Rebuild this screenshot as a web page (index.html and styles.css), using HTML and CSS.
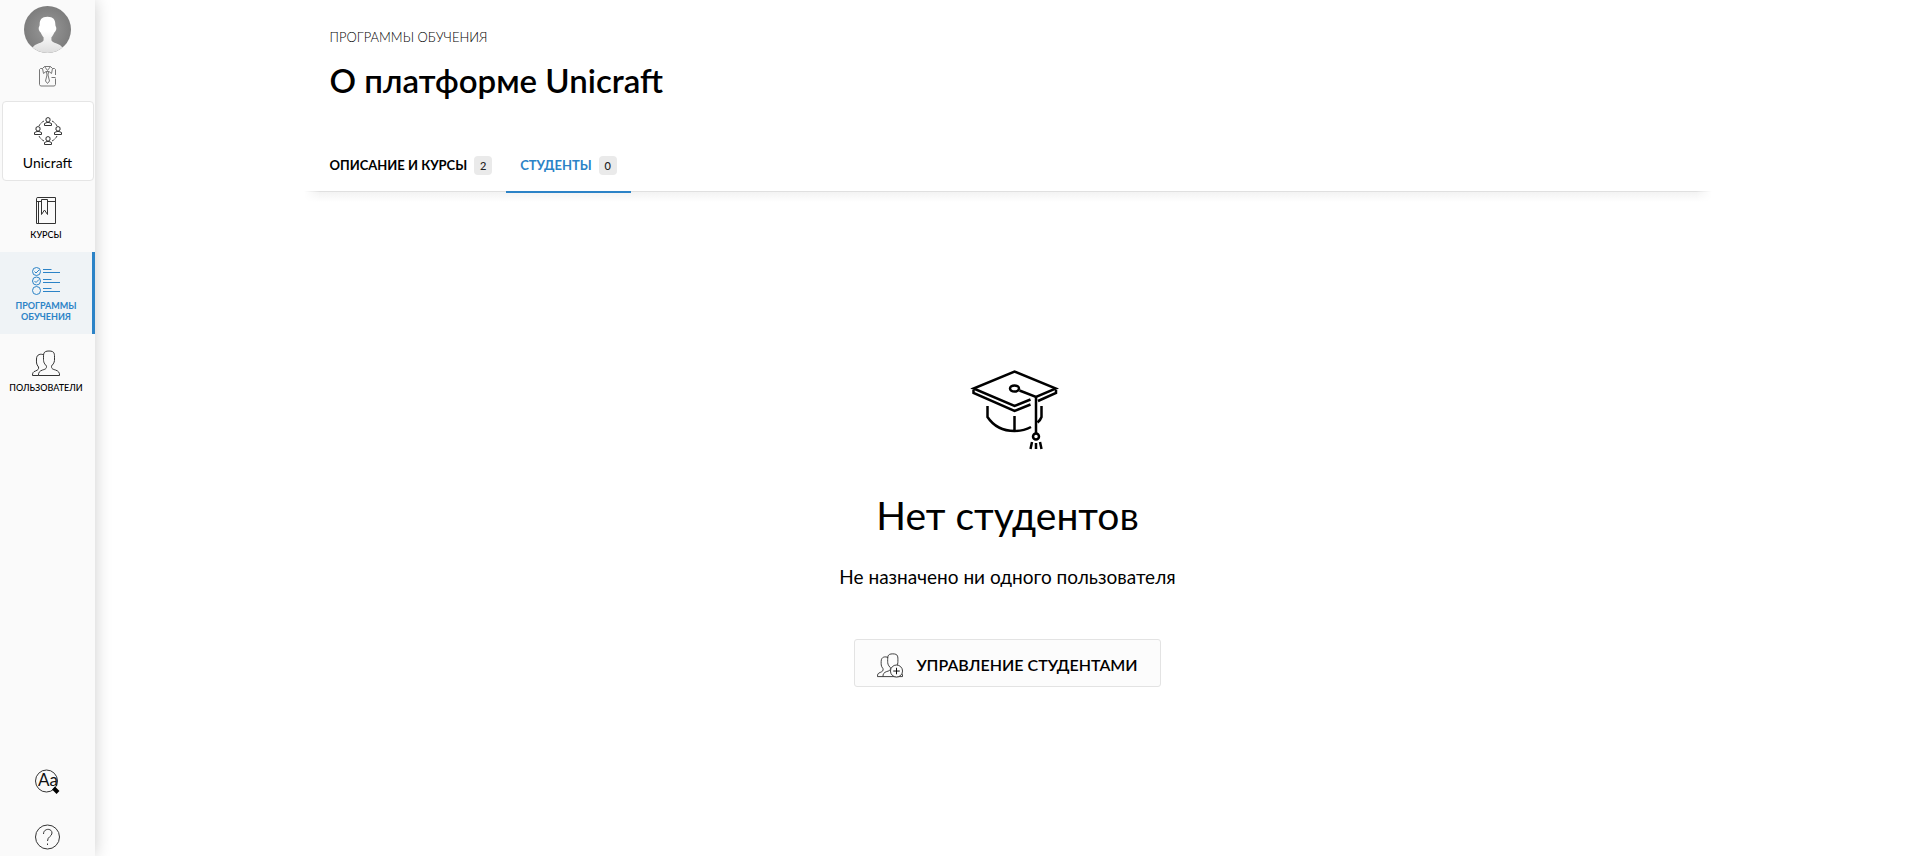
FILE: index.html
```html
<!doctype html>
<html lang="ru">
  <head>
    <meta charset="utf-8">
    <meta name="viewport" content="width=device-width, initial-scale=1">
    <title>О платформе Unicraft</title>
    <link rel="stylesheet" href="styles.css">
  </head>
  <body>
    <aside class="sidebar">
      <a class="avatar" href="#" aria-label="Профиль">
        <svg width="47" height="47" viewBox="0 0 48 48">
          <defs>
            <linearGradient id="face" x1="0" y1="0" x2="0" y2="1">
              <stop offset="0.4" stop-color="#fff"/>
              <stop offset="1" stop-color="#ddd"/>
            </linearGradient>
            <radialGradient id="back">
              <stop offset="0" stop-color="#999"/>
              <stop offset="1" stop-color="#7d7d7d"/>
            </radialGradient>
            <clipPath id="round"><circle cx="24" cy="24" r="24"/></clipPath>
          </defs>
          <g clip-path="url(#round)">
            <rect width="48" height="48" fill="url(#back)"/>
            <path fill="url(#face)" d="M24 11c-6 0-8 3-8 8 0 2-1 2-1 4s1 3 2 4c1 2 2 4 3 5v3c-1 3-8 3-11 7-2 2-3 4-3 6h36c0-2-1-4-3-6-3-4-10-4-11-7v-3c1-1 2-3 3-5 1-1 2-2 2-4s-1-2-1-4c0-5-2-8-8-8z"/>
          </g>
        </svg>
      </a>
      <a class="role" href="#" aria-label="Роль">
        <svg class="line" width="17" height="21" viewBox="0 0 17 21">
          <path d="M3.500 2.500h-2l-1 1v15l1 1.500h14l1-1.500v-6M16.500 9V3.500l-1-1h-2M16.500 11.500h-4"/>
          <path d="M3.500 2.500l2-2h6l2 2-1 5-2.500-2H7l-2.500 2zM5.500 .5l3 4 3-4"/>
          <path d="M7.500 6l.5 3-1.500 6 2 2.500 2-2.500L9 9l.5-3"/>
        </svg>
      </a>
      <a class="company" href="#">
        <svg class="line dark" width="28" height="28" viewBox="0 0 28 28">
          <path stroke-dasharray="3 1" d="M5 9a11 11 0 0 1 5-5M18 4a11 11 0 0 1 5 5M23 19a11 11 0 0 1-5 5M10 24a11 11 0 0 1-5-5"/>
          <g id="person">
            <path d="M12 1.500q2-2 4 0v2.500q-2 2.500-4 0zM10.500 8.500v-2l2.500-1h2l2.500 1v2z"/>
          </g>
          <use href="#person" x="-10" y="9"/>
          <use href="#person" x="10" y="9"/>
          <use href="#person" y="19"/>
        </svg>
        <span>Unicraft</span>
      </a>
      <nav class="menu">
        <a class="menu-item" href="#">
          <svg class="line dark" width="28" height="28" viewBox="0 0 28 28">
            <path d="M6 1.500h17.500v26H4.500V2.500q0-1 1.500-1M4.500 5.500h5M15 5.500h8.500M6.500 5.500v22M9.500 3.500v15l3-4.500 3 4.500v-15z"/>
          </svg>
          <span>КУРСЫ</span>
        </a>
        <a class="menu-item active" href="#">
          <svg class="line" width="28" height="28" viewBox="0 0 28 28">
            <circle cx="4.500" cy="4.500" r="4"/>
            <circle cx="4.500" cy="14" r="4"/>
            <circle cx="4.500" cy="23.500" r="4"/>
            <path d="M2.500 4.500L4 6l3-3M2.500 14L4 15.500l3-3M11 2.500h8.500M11 5.500h17M11 12.500h8.500M11 15.500h17M11 21.500h8.500M11 24.500h17"/>
          </svg>
          <span>ПРОГРАММЫ ОБУЧЕНИЯ</span>
        </a>
        <a class="menu-item" href="#">
          <svg class="line dark" width="28" height="28" viewBox="0 0 28 28">
            <path id="front-user" d="M6.500 26.500q-.5-4 4-5.500c4-1 4-2 4-4-3-3-3-5-3-7 0-5-.5-8 5.500-8s5.500 3 5.500 8c0 2 0 4-3 7 0 2 0 3 4 4q4.500 1.500 4 5.500z"/>
            <path id="back-user" d="M12 6C9 4.500 4.500 5 4.500 10c0 3-.5 5 2 8 .5 2-.5 3-3 4-2.500.8-3 2-3 4.500h6"/>
          </svg>
          <span>ПОЛЬЗОВАТЕЛИ</span>
        </a>
      </nav>
      <div class="tools">
        <button class="tool" type="button" aria-label="Терминология">
          <svg class="line dark" width="26" height="26" viewBox="0 0 26 26">
            <circle cx="11.500" cy="12" r="11"/>
            <path class="handle" d="M18.500 19l4.500 4.500"/>
            <text x="3" y="17">Aa</text>
          </svg>
        </button>
        <button class="tool" type="button" aria-label="Помощь">
          <svg class="line dark" width="26" height="26" viewBox="0 0 26 26">
            <circle cx="12.500" cy="13" r="12"/>
            <path d="M8.500 10c0-6 8.500-6 8.500-1 0 3.500-4.500 3.500-4.500 8M12.500 19.500v1.500"/>
          </svg>
        </button>
      </div>
    </aside>

    <main class="content">
      <header class="page-header">
        <a class="breadcrumb" href="#">ПРОГРАММЫ ОБУЧЕНИЯ</a>
        <h1>О платформе Unicraft</h1>
        <nav class="tabs">
          <a class="tab" href="#">ОПИСАНИЕ И КУРСЫ <span class="count">2</span></a>
          <a class="tab active" href="#">СТУДЕНТЫ <span class="count">0</span></a>
        </nav>
      </header>
      <section class="empty">
        <svg class="cap" width="102" height="80" viewBox="0 0 102 80">
          <path d="M73.500 29.500l-16 6.500-41-17.500 41-17 41.500 17L79 27 62.500 20.500"/>
          <path d="M16.500 20v3l41 18 16-6.500M99 20v3L81 31M79 26v37"/>
          <path d="M30.500 36v11c6 9 16 14 27 14q9 0 16.500-4M57.500 46v15M84.500 36v11q-1 3-4 5.500"/>
          <ellipse cx="57.500" cy="18.500" rx="4.500" ry="3"/>
          <circle cx="79" cy="66.500" r="3"/>
          <path d="M75 72l-1.500 7M79 73v6M83 72l1.500 7"/>
        </svg>
        <h2>Нет студентов</h2>
        <p>Не назначено ни одного пользователя</p>
        <button class="manage" type="button">
          <svg class="line dark" width="26" height="26" viewBox="0 0 28 28">
            <use href="#front-user"/>
            <use href="#back-user"/>
            <circle class="plus" cx="21" cy="20.500" r="6.500"/>
            <path class="sign" d="M21 17v7M17.500 20.500h7"/>
          </svg>
          УПРАВЛЕНИЕ СТУДЕНТАМИ
        </button>
      </section>
    </main>
  </body>
</html>
```

FILE: styles.css
```css
* {
  box-sizing: border-box;
}
body {
  margin: 0;
  min-height: 100vh;
  display: flex;
  background: #fff;
  color: #000;
  font-family: Lato, "Open Sans", sans-serif;
}
a {
  color: inherit;
  text-decoration: none;
}
button {
  font: inherit;
  color: inherit;
  cursor: pointer;
}
svg {
  display: block;
  flex-shrink: 0;
}
.line {
  fill: none;
  stroke: #777;
  stroke-width: 1;
}
.line.dark {
  stroke: #333;
}

/* sidebar */
.sidebar {
  width: 95px;
  flex-shrink: 0;
  display: flex;
  flex-direction: column;
  align-items: center;
  padding: 6px 0;
  background: #fafafa;
  box-shadow: 0 0 16px rgba(0, 0, 0, 0.2);
}
.role {
  margin-top: 13px;
}
.company {
  width: 92px;
  height: 80px;
  margin-top: 14px;
  padding-top: 15px;
  display: flex;
  flex-direction: column;
  align-items: center;
  gap: 9px;
  background: #fff;
  border: 1px solid #e5e5e5;
  border-radius: 4px;
  font-size: 14px;
  font-weight: 400;
  line-height: 18px;
}
.menu {
  width: 100%;
}
.menu-item {
  display: flex;
  flex-direction: column;
  align-items: center;
  gap: 5px;
  padding: 15px 0 12px;
  border-right: 3px solid transparent;
  font-size: 9px;
  font-weight: 500;
  line-height: 11px;
  text-align: center;
}
.menu-item.active {
  background: #eff3f6;
  border-color: #2c83c7;
  color: #2c83c7;
  font-weight: 700;
}
.menu-item.active span {
  width: 64px;
}
.menu-item.active .line {
  stroke: #2c83c7;
}
.tools {
  margin-top: auto;
  display: flex;
  flex-direction: column;
  gap: 29px;
}
.tool {
  padding: 0;
  border: 0;
  background: none;
}
.tool text {
  fill: #111;
  stroke: none;
  font-size: 17px;
}
.handle {
  stroke: #000;
  stroke-width: 4;
}

/* page */
.content {
  flex: 1;
  min-width: 0;
}
.page-header {
  position: relative;
  max-width: 1400px;
  margin: 0 auto;
  padding: 28px 8px 0;
  background: #fff;
}
/* soft shadow under the tabs, faded at both ends */
.page-header::after {
  content: "";
  position: absolute;
  top: 100%;
  left: -4px;
  right: -4px;
  height: 10px;
  border-top: 1px solid #e0e0e0;
  background: linear-gradient(#f3f3f3, #fff);
  mask-image: linear-gradient(90deg, transparent, #000 16px calc(100% - 16px), transparent);
}
.breadcrumb {
  display: block;
  margin-left: 14px;
  font-size: 13px;
  font-weight: 300;
  line-height: 18px;
}
h1 {
  margin: 14px 14px 0;
  font-size: 33px;
  font-weight: 600;
  line-height: 40px;
}
.tabs {
  display: flex;
  margin-top: 39px;
}
.tab {
  position: relative;
  z-index: 1;
  display: flex;
  align-items: center;
  gap: 7px;
  height: 52px;
  padding: 0 14px;
  font-size: 13px;
  font-weight: 700;
}
.tab.active {
  color: #2c83c7;
}
.tab.active::after {
  content: "";
  position: absolute;
  top: 100%;
  left: 0;
  right: 0;
  height: 2px;
  background: #2c83c7;
}
.count {
  width: 18px;
  border-radius: 4px;
  background: #eaeaea;
  color: #222;
  font-size: 11px;
  font-weight: 500;
  line-height: 19px;
  text-align: center;
}

/* empty state */
.empty {
  display: flex;
  flex-direction: column;
  align-items: center;
  padding: 179px 20px 40px;
  text-align: center;
}
.cap {
  fill: none;
  stroke: #000;
  stroke-width: 2.5;
}
h2 {
  margin: 41px 0 0;
  font-size: 39px;
  font-weight: 400;
  line-height: 48px;
}
.empty p {
  margin: 26px 0 0;
  font-size: 19px;
  font-weight: 400;
  line-height: 24px;
}
.manage {
  display: flex;
  align-items: center;
  gap: 13px;
  height: 48px;
  margin-top: 50px;
  padding: 3px 22px 0;
  background: #fcfcfc;
  border: 1px solid #e3e3e3;
  border-radius: 3px;
  font-size: 16px;
  font-weight: 600;
}
.plus {
  fill: #fcfcfc;
}
.sign {
  stroke: #000;
}
```
